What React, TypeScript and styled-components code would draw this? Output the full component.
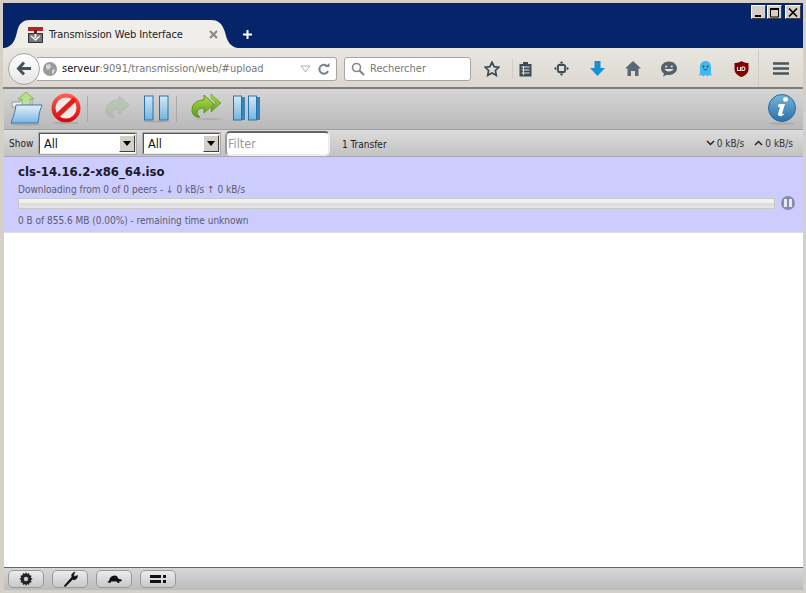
import React from "react";
import styled, { createGlobalStyle } from "styled-components";

const Global = createGlobalStyle`
  html, body { margin: 0; padding: 0; height: 100%; overflow: hidden; background: #d4d0c8; }
  #root { height: 100%; }
  * { box-sizing: border-box; }
`;
const Win = styled.div`
  width: 806px; height: 593px; display: flex; flex-direction: column;
  padding: 3px 3px 3px 4px; background: #d4d0c8;
  font-family: "DejaVu Sans Condensed", "DejaVu Sans", sans-serif; font-stretch: condensed; overflow: hidden;
`;
const TitleBar = styled.div`
  height: 45px; background: #06246a; display: flex; justify-content: space-between; margin-left: -1px;
  position: relative; flex: none;
`;
const TabRow = styled.div`display: flex; align-items: flex-end; padding-left: 14px; gap: 7px;`;
const Tab = styled.div`
  position: relative; width: 218px; height: 28px; display: flex; align-items: center;
  padding: 1px 0 0 11px; font-size: 11px; color: #222; letter-spacing: -0.08px;
`;
const TabShape = styled.svg`position: absolute; left: -13px; top: 0; width: 234px; height: 28px;`;
const TabLabel = styled.span`position: relative; margin-left: 6px; width: 160px; white-space: nowrap;`;
const TabIcon = styled.svg`position: relative; width: 15px; height: 16px; flex: none;`;
const TabClose = styled.svg`position: relative; width: 9px; height: 9px; margin-left: 0;`;
const Plus = styled.svg`width: 11px; height: 11px; margin-bottom: 8px;`;
const WinButtons = styled.div`display: flex; gap: 1px; padding-top: 2px; align-items: flex-start; height: 18px; margin-right: 2px;`;
const WinButton = styled.div<{ $gap?: number; $w?: number }>`
  width: ${(p) => p.$w ?? 15}px; height: 14px; margin-left: ${(p) => p.$gap ?? 0}px; background: #d4d0c8;
  border: 1px solid; border-color: #fff #404040 #404040 #fff; display: flex; align-items: center; justify-content: center;
`;
const Nav = styled.div`
  height: 41px; flex: none; background: linear-gradient(#e8e6e0, #dcd8d0); border-bottom: 2px solid #7e7e7e;
  margin-left: -1px; display: flex; align-items: center; position: relative; padding: 2px 0 0 5px;
`;
const BackBtn = styled.div`
  width: 32px; height: 32px; border-radius: 50%; border: 1px solid #a6a6a6; background: linear-gradient(#fff, #e6e6e6);
  display: flex; align-items: center; justify-content: center; position: relative; z-index: 1; flex: none;
`;
const UrlBar = styled.div`
  width: 300px; height: 24px; margin-left: -3px; background: #fff; border: 1px solid #a5a5a5; border-left: none; border-radius: 0 3px 3px 0;
  display: flex; align-items: center; padding-left: 6px; font-size: 11px; color: #777; flex: none;
`;
const Globe = styled.svg`width: 14px; height: 14px; flex: none; margin-right: 5px;`;
const Host = styled.span`color: #111;`;
const UrlText = styled.span`flex: 1; white-space: nowrap;`;
const UrlArrow = styled.svg`width: 11px; height: 8px; margin-right: 7px; flex: none;`;
const Reload = styled.svg`width: 12px; height: 12px; margin-right: 6px; flex: none;`;
const SearchBox = styled.div`
  width: 127px; height: 24px; margin-left: 7px; background: #fff; border: 1px solid #a5a5a5; border-radius: 3px;
  display: flex; align-items: center; padding-left: 6px; gap: 5px; font-size: 11px; color: #777; flex: none;
`;
const NavIcons = styled.div`display: flex; align-items: center; flex: 1; position: relative; height: 100%;`;
const NavIconSlot = styled.div<{ $w: number }>`
  width: ${(p) => p.$w}px; height: 100%; flex: none; display: flex; align-items: center; justify-content: center;
`;
const NavSep = styled.div<{ $h: number }>`width: 1px; height: ${(p) => p.$h}px; background: #cfccc5; flex: none;`;
const Toolbar = styled.div`
  height: 41px; flex: none; background: linear-gradient(#d6d6d6, #b9b9b9); border-bottom: 1px solid #a0a0a0;
  display: flex; align-items: center; padding: 0 6px 0 6px;
`;
const ToolIcon = styled.svg<{ $ml?: number; $w: number }>`width: ${(p) => p.$w}px; height: 36px; flex: none; margin-left: ${(p) => p.$ml ?? 0}px;`;
const ToolSep = styled.div<{ $ml: number }>`width: 1px; height: 26px; background: #aaa; margin-left: ${(p) => p.$ml}px; flex: none;`;
const Spacer = styled.div`flex: 1;`;
const FilterBar = styled.div`
  height: 27px; flex: none; background: linear-gradient(#dcdcdc, #c2c2c2); border-bottom: 1px solid #a8a8b8;
  display: flex; align-items: center; padding: 0 10px 0 5px; font-size: 10px; color: #222;
`;
const ShowLabel = styled.span`width: 29px; padding-top: 1px;`;
const SelectBox = styled.div<{ $w: number; $ml?: number }>`
  width: ${(p) => p.$w}px; height: 23px; margin-left: ${(p) => p.$ml ?? 0}px; background: #fff;
  border: 2px solid; border-color: #555 #e6e6e6 #e6e6e6 #555; display: flex; align-items: center; padding-left: 4px;
  font-size: 12.5px; color: #111; position: relative; outline: 1px solid #aaa; outline-offset: -1px;
`;
const SelectText = styled.span`flex: 1;`;
const SelectArrow = styled.div`
  width: 16px; height: 17px; background: #d4d0c8; border: 1px solid; border-color: #fff #404040 #404040 #fff;
  display: flex; align-items: center; justify-content: center; flex: none;
`;
const FilterInput = styled.div`
  width: 105px; height: 25px; margin-left: 4px; background: #fff; border-radius: 5px; border: 2px solid; border-color: #666 #eee #eee #999;
  font-size: 12.5px; color: #999; display: flex; align-items: center; padding-left: 1px;
`;
const Count = styled.span`margin-left: 12px; flex: 1; padding-top: 3px;`;
const Speed = styled.span`display: inline-flex; align-items: center; gap: 2px; margin-left: 10px; color: #333;`;
const Row = styled.div`
  height: 76px; flex: none; background: #ccccff; border-bottom: 1px solid #ddd; padding: 6px 8px 0 14px;
`;
const Name = styled.div`font-weight: 700; font-size: 13px; color: #1a1a2a; line-height: 18px;`;
const Meta = styled.div`font-size: 10px; color: #5c5c6c; line-height: 14px; margin-top: 2px;`;
const BarRow = styled.div`display: flex; align-items: center; gap: 6px; height: 14px; margin-top: -1px;`;
const Bar = styled.div`
  flex: 1; height: 11px; border: 1px solid #c8c8c8;
  background: linear-gradient(#f2f2f2 0, #eee 50%, #dcdcdc 50%, #e4e4e4 100%);
`;
const PauseDot = styled.div`
  width: 14px; height: 14px; border-radius: 50%; background: #8a8aaa; display: flex; align-items: center; justify-content: center; gap: 2px; flex: none;
`;
const PauseBar = styled.i`display: block; width: 3px; height: 8px; background: #e8e8f4;`;
const Meta2 = styled(Meta)`margin-top: 4px; letter-spacing: -0.02px;`;
const Content = styled.div`flex: 1; background: #fff; min-height: 0;`;
const Footer = styled.div`
  height: 23px; flex: none; background: linear-gradient(#d8d8d8, #bcbcbc); border-top: 1px solid #666; display: flex; align-items: center; gap: 8px; padding-left: 4px;
`;
const FootBtn = styled.div`
  width: 36px; height: 18px; border: 1px solid #999; border-radius: 5px; background: linear-gradient(#ececec, #c8c8c8);
  display: flex; align-items: center; justify-content: center;
`;
const Shot = styled.svg<{ $w?: number }>`width: ${(p) => p.$w ?? 16}px; height: 16px;`;

const ink = "#3e4a56";
export default function App() {
  return (
    <Win>
      <Global />
      <TitleBar>
        <TabRow>
          <Tab>
            <TabShape viewBox="0 0 234 28">
              <path d="M0 28C8 27 11 21 13 12C15 3 19 0 26 0H207C214 0 218 3 221 12C223 21 226 27 234 28Z" fill="#efeeea" />
            </TabShape>
            <TabIcon viewBox="0 0 15 16">
              <rect x="0" y="0" width="15" height="4" fill="#b8222a" />
              <rect x="6" y="3" width="3" height="4" fill="#7a1a1a" />
              <rect x="0.5" y="6.500" width="14" height="9" fill="#777" stroke="#333" />
              <path d="M3 9l4.500 4L12 9" stroke="#eee" strokeWidth="1.600" fill="none" />
              <rect x="6.500" y="7" width="2" height="4" fill="#eee" />
            </TabIcon>
            <TabLabel>Transmission Web Interface</TabLabel>
            <TabClose viewBox="0 0 9 9"><path d="M1 1l7 7M8 1L1 8" stroke="#8a8a8a" strokeWidth="2.200" /></TabClose>
          </Tab>
          <Plus viewBox="0 0 11 11"><path d="M5.500 1v9M1 5.500h9" stroke="#fff" strokeWidth="2" /></Plus>
        </TabRow>
        <WinButtons>
          <WinButton><svg width="9" height="9" viewBox="0 0 9 9"><rect x="1" y="7" width="6" height="2" fill="#000" /></svg></WinButton>
          <WinButton><svg width="11" height="11" viewBox="0 0 11 11"><path d="M1.500 1v9h8V1" stroke="#000" fill="none" /><rect x="1" y="1" width="9" height="2" /></svg></WinButton>
          <WinButton $gap={2} $w={16}><svg width="10" height="9" viewBox="0 0 10 9"><path d="M1 0.500l8 8M9 0.500l-8 8" stroke="#000" strokeWidth="1.600" /></svg></WinButton>
        </WinButtons>
      </TitleBar>
      <Nav>
        <BackBtn>
          <svg width="17" height="15" viewBox="0 0 17 15"><path d="M8 1.500L2.500 7.500 8 13.500M3 7.500H15" stroke="#45525f" strokeWidth="3" fill="none" /></svg>
        </BackBtn>
        <UrlBar>
          <Globe viewBox="0 0 14 14"><circle cx="7" cy="7" r="7" fill="#9a9a9a" /><path d="M3 3l4-1 1 3-3 3-2-2zM9 8l3-1-1 4-2 1z" fill="#d8d8d8" /></Globe>
          <UrlText><Host>serveur</Host>:9091/transmission/web/#upload</UrlText>
          <UrlArrow viewBox="0 0 11 8"><path d="M1 1h9L5.500 7z" fill="#fff" stroke="#a8b0b8" /></UrlArrow>
          <Reload viewBox="0 0 12 12"><path d="M9.500 3.500A4.500 4.500 0 1 0 10 8" stroke="#77828c" strokeWidth="2" fill="none" /><path d="M7 4h4.500V0z" fill="#77828c" /></Reload>
        </UrlBar>
        <SearchBox>
          <svg width="14" height="14" viewBox="0 0 14 14"><circle cx="5.500" cy="5.500" r="4" stroke="#888" strokeWidth="1.600" fill="none" /><path d="M8.500 8.500l4.500 4.500" stroke="#888" strokeWidth="2.200" /></svg>
          Rechercher
        </SearchBox>
        <NavIcons>
          <NavIconSlot $w={41}>
            <svg width="16" height="16" viewBox="0 0 16 16"><path d="M8 1.200l2.100 4.400 4.800.6-3.500 3.300.9 4.800L8 12l-4.300 2.300.9-4.800L1.100 6.200l4.800-.6z" fill="none" stroke={ink} strokeWidth="1.700" /></svg>
          </NavIconSlot>
          <NavSep $h={20} />
          <NavIconSlot $w={24}>
            <svg width="15" height="16" viewBox="0 0 15 16"><path d="M5 3V1h5v2h3.500v12.500h-12V3z" fill={ink} /><path d="M3.500 6h8M3.500 9h8M3.500 12h8" stroke="#e6e4de" strokeWidth="1.200" /><path d="M5.500 5v9" stroke="#e6e4de" /></svg>
          </NavIconSlot>
          <NavIconSlot $w={48}>
            <svg width="15" height="15" viewBox="0 0 15 15"><path d="M7.500 0l2 2.400h-4zM7.500 15l2-2.400h-4zM0 7.500l2.400-2v4zM15 7.500l-2.400-2v4z" fill={ink} /><rect x="4" y="4" width="7" height="7" rx="1" fill="none" stroke={ink} strokeWidth="1.800" /></svg>
          </NavIconSlot>
          <NavIconSlot $w={24}>
            <svg width="15" height="15" viewBox="0 0 15 15"><path d="M4.500 0h6v7h4.500L7.500 15 0 7h4.500z" fill="#1a8fd4" /></svg>
          </NavIconSlot>
          <NavIconSlot $w={48}>
            <svg width="16" height="15" viewBox="0 0 16 15"><path d="M8 0L0 7.500h2.500V15H6v-5h4v5h3.500V7.500H16z" fill="#5b6875" /></svg>
          </NavIconSlot>
          <NavIconSlot $w={24}>
            <svg width="16" height="16" viewBox="0 0 16 16"><path d="M8 .5c4.400 0 8 2.900 8 6.800s-3.600 6.700-8 6.700c-.8 0-1.500 0-2.200-.3L2 15.500l1-3C1 11.300 0 9.400 0 7.300 0 3.400 3.600.5 8 .5z" fill="#56606a" /><circle cx="5.200" cy="5.500" r="1.100" fill="#e6e4de" /><circle cx="10.800" cy="5.500" r="1.100" fill="#e6e4de" /><path d="M3.500 8c1 3.300 8 3.300 9 0z" fill="#e6e4de" /></svg>
          </NavIconSlot>
          <NavIconSlot $w={48}>
            <svg width="13" height="16" viewBox="0 0 13 16"><path d="M6.500 0C10 0 12 2.500 12 6v6l1 3-2.500-1.200L9 15.500l-2.500-1.500-2.500 1.500-1.500-1.700L0 15l1-3V6C1 2.500 3 0 6.500 0z" fill="#43b8f0" /><circle cx="4.500" cy="5.500" r="1" fill="#184a66" /><circle cx="8.500" cy="5.500" r="1" fill="#184a66" /><path d="M4.500 8c1 1.200 3 1.200 4 0" stroke="#184a66" fill="none" /></svg>
          </NavIconSlot>
          <NavIconSlot $w={25}>
            <svg width="15" height="16" viewBox="0 0 15 16"><path d="M7.500 0c2 1.500 4.500 2 7 2v6c0 4-3 6.500-7 8-4-1.500-7-4-7-8V2c2.500 0 5-.5 7-2z" fill="#800000" /><path d="M3.500 6v3.500h3V6M8 6v3.500h1.500c2 0 2-3.500 0-3.500z" fill="none" stroke="#f4e8e8" strokeWidth="1.100" /></svg>
          </NavIconSlot>
          <Spacer />
          <NavSep $h={37} />
          <NavIconSlot $w={44}>
            <svg width="16" height="13" viewBox="0 0 16 13"><path d="M0 1.500h16M0 6.500h16M0 11.500h16" stroke="#4a5560" strokeWidth="2.600" /></svg>
          </NavIconSlot>
        </NavIcons>
      </Nav>
      <Toolbar>
        <ToolIcon $w={33} viewBox="0 0 33 36">
          <defs>
            <linearGradient id="fold" x1="0" y1="0" x2="0" y2="1"><stop offset="0" stopColor="#e4f1fb" /><stop offset="1" stopColor="#7ab4e4" /></linearGradient>
            <linearGradient id="grn" x1="0" y1="0" x2="0" y2="1"><stop offset="0" stopColor="#b6dc78" /><stop offset="1" stopColor="#c4e4c8" /></linearGradient>
          </defs>
          <path d="M2 11h8l2-3h10v8H2z" fill="#eee" stroke="#999" />
          <path d="M16 1l8 7h-4v12h-8V8H8z" fill="url(#grn)" stroke="#7ea848" strokeWidth=".8" />
          <path d="M6 14h26c-1 4-3 6-3 12l-1 6H1c2-6 4-10 5-18z" fill="url(#fold)" stroke="#3b78b0" />
          <ellipse cx="16" cy="33.500" rx="15" ry="1.200" fill="#999" opacity=".6" />
        </ToolIcon>
        <ToolIcon $w={30} $ml={8} viewBox="0 0 30 36">
          <defs><linearGradient id="red" x1="0" y1="0" x2="0" y2="1"><stop offset="0" stopColor="#ff5a50" /><stop offset="1" stopColor="#d80a0a" /></linearGradient></defs>
          <circle cx="15" cy="17" r="12.500" fill="#f4e8e8" stroke="url(#red)" strokeWidth="4" />
          <path d="M6 25L24 8" stroke="#e0201c" strokeWidth="5" />
          <ellipse cx="15" cy="32" rx="13" ry="1" fill="#999" opacity=".6" />
        </ToolIcon>
        <ToolSep $ml={6} />
        <ToolIcon $w={25} $ml={17} viewBox="0 0 25 36" opacity={0.4}>
          <path d="M14 5l10 9-10 9v-5c-5 0-7 2-7 5 0 2 2 3 3 3-5 1-9-2-9-7 0-6 6-10 13-10z" fill="#9cb890" stroke="#8aa880" />
        </ToolIcon>
        <ToolIcon $w={26} $ml={14} viewBox="0 0 26 36">
          <defs><linearGradient id="blu" x1="0" y1="0" x2="0" y2="1"><stop offset="0" stopColor="#d4e8f6" /><stop offset="1" stopColor="#74b4e0" /></linearGradient></defs>
          <rect x=".5" y="5" width="8.500" height="24" fill="url(#blu)" stroke="#2874a8" />
          <rect x="15.500" y="5" width="8.500" height="24" fill="url(#blu)" stroke="#2874a8" />
          <ellipse cx="12" cy="30.500" rx="12" ry="1" fill="#999" opacity=".6" />
        </ToolIcon>
        <ToolSep $ml={6} />
        <ToolIcon $w={31} $ml={14} viewBox="0 0 31 36">
          <defs><linearGradient id="gr2" x1="0" y1="0" x2="0" y2="1"><stop offset="0" stopColor="#b0e040" /><stop offset="1" stopColor="#5c9c20" /></linearGradient></defs>
          <path d="M20 3l10 9-10 9v-4l5-5-5-5z" fill="url(#gr2)" stroke="#5e9420" strokeWidth=".6" />
          <path d="M13 4l10 9-10 9v-5c-5 0-7 2-7 5 0 2 2 3 3 4-5 1-8-3-8-7 0-7 6-10 12-10z" fill="url(#gr2)" stroke="#5e9420" />
          <ellipse cx="18" cy="28" rx="13" ry=".8" fill="#999" opacity=".6" />
        </ToolIcon>
        <ToolIcon $w={28} $ml={11} viewBox="0 0 28 36">
          <rect x="8" y="6" width="4" height="23" fill="#3884b8" />
          <rect x=".5" y="5" width="8" height="24" fill="url(#blu)" stroke="#2874a8" />
          <rect x="23" y="6" width="4" height="23" fill="#3884b8" />
          <rect x="15.500" y="5" width="8" height="24" fill="url(#blu)" stroke="#2874a8" />
        </ToolIcon>
        <Spacer />
        <ToolIcon $w={30} viewBox="0 0 30 36">
          <defs><linearGradient id="inf" x1="0" y1="0" x2="0" y2="1"><stop offset="0" stopColor="#78b6dc" /><stop offset="1" stopColor="#2a70a8" /></linearGradient></defs>
          <circle cx="15" cy="17" r="13.500" fill="url(#inf)" stroke="#2a6a9c" />
          <ellipse cx="18.500" cy="8.500" rx="2.500" ry="2.200" fill="#fff" />
          <path d="M11.500 13h6.500l-2.800 9c-.3 1.200.6 1.400 2.300.6-1 2.700-6.500 3.800-6.500.6l2-7.200h-2z" fill="#fff" />
          <ellipse cx="15" cy="32.500" rx="13" ry="1" fill="#999" opacity=".6" />
        </ToolIcon>
      </Toolbar>
      <FilterBar>
        <ShowLabel>Show</ShowLabel>
        <SelectBox $w={99}>
          <SelectText>All</SelectText>
          <SelectArrow><svg width="8" height="5" viewBox="0 0 8 5"><path d="M0 0h8L4 5z" fill="#000" /></svg></SelectArrow>
        </SelectBox>
        <SelectBox $w={79} $ml={5}>
          <SelectText>All</SelectText>
          <SelectArrow><svg width="8" height="5" viewBox="0 0 8 5"><path d="M0 0h8L4 5z" fill="#000" /></svg></SelectArrow>
        </SelectBox>
        <FilterInput>Filter</FilterInput>
        <Count>1 Transfer</Count>
        <Speed><svg width="9" height="6" viewBox="0 0 9 6"><path d="M1 1l3.500 3.500L8 1" stroke="#222" strokeWidth="1.500" fill="none" /></svg>0 kB/s</Speed>
        <Speed><svg width="9" height="6" viewBox="0 0 9 6"><path d="M1 5l3.500-3.500L8 5" stroke="#222" strokeWidth="1.500" fill="none" /></svg>0 kB/s</Speed>
      </FilterBar>
      <Row>
        <Name>cls-14.16.2-x86_64.iso</Name>
        <Meta>Downloading from 0 of 0 peers - ↓ 0 kB/s ↑ 0 kB/s</Meta>
        <BarRow><Bar /><PauseDot><PauseBar /><PauseBar /></PauseDot></BarRow>
        <Meta2>0 B of 855.6 MB (0.00%) - remaining time unknown</Meta2>
      </Row>
      <Content />
      <Footer>
        <FootBtn><Shot viewBox="0 0 16 16"><path d="M8 1l1 2 2-1 .5 2.200 2.200.5-1 2 2 1.300-2 1.300 1 2-2.200.5L11 14l-2-1-1 2-1-2-2 1-.5-2.200-2.200-.5 1-2L1.300 8l2-1.300-1-2 2.200-.5L5 2l2 1z" fill="#222" /><circle cx="8" cy="8" r="2.200" fill="#ccc" /></Shot></FootBtn>
        <FootBtn><Shot viewBox="0 0 16 16"><path d="M2 15l8-9c-1-2 0-4 3-5l-1.500 3 1 1.500 3-1c0 3-2 5-5 4l-7 7z" fill="#111" stroke="#111" strokeWidth=".6" /></Shot></FootBtn>
        <FootBtn><Shot viewBox="0 0 16 16"><path d="M0 10.500l3-.5C3.600 6.800 5.500 4.500 8.500 4.500c2.300 0 3.500 1.800 4 3.500h1.200c1 0 2.300 1 2.300 1.500s-1.500 1-3 1l.5 1.500h-2L11 10.500H5l-.8 1.500h-2l.5-1.500z" fill="#111" /></Shot></FootBtn>
        <FootBtn><Shot $w={18} viewBox="0 0 16 16"><path d="M0 4h11v3H0zM13 4h3v3h-3zM0 9h11v3H0zM13 9h3v3h-3z" fill="#111" /></Shot></FootBtn>
      </Footer>
    </Win>
  );
}
